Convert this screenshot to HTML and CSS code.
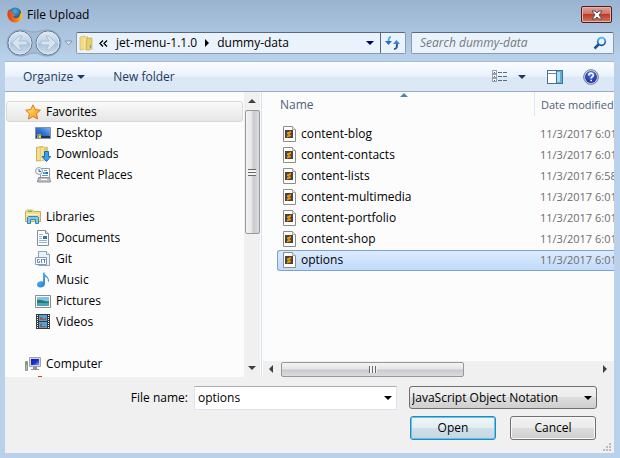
FILE: index.html
```html
<!DOCTYPE html>
<html lang="en">
<head>
<meta charset="utf-8">
<title>File Upload</title>
<link rel="stylesheet" href="styles.css">
</head>
<body>
<svg class="defs" aria-hidden="true">
  <defs>
    <linearGradient id="g-folder" x1="0" x2="1"><stop offset="0" stop-color="#fbeeb0"/><stop offset="1" stop-color="#e0bc55"/></linearGradient>
    <linearGradient id="g-disc" x1="0" x2="0" y1="0" y2="1"><stop offset="0" stop-color="#dfe9f4"/><stop offset=".5" stop-color="#bdd0e4"/><stop offset=".5" stop-color="#a9c1da"/><stop offset="1" stop-color="#cfe0f2"/></linearGradient>
    <linearGradient id="g-star" x1="0" x2="1" y1="0" y2="1"><stop offset="0" stop-color="#fff6a0"/><stop offset=".5" stop-color="#fdc23c"/><stop offset="1" stop-color="#f28a1c"/></linearGradient>
    <linearGradient id="g-desk" x1="0" x2="1" y1="1" y2="0"><stop offset="0" stop-color="#1a4aa8"/><stop offset=".5" stop-color="#2f6fd0"/><stop offset="1" stop-color="#86b8f2"/></linearGradient>
    <linearGradient id="g-music" x1="0" x2="1" y1="0" y2="1"><stop offset="0" stop-color="#6cc4f4"/><stop offset="1" stop-color="#1a74c4"/></linearGradient>
    <linearGradient id="g-arrow" x1="0" x2="0" y1="0" y2="1"><stop offset="0" stop-color="#4cbcec"/><stop offset="1" stop-color="#1a4fa8"/></linearGradient>
    <linearGradient id="g-screen" x1="0" x2="1" y1="0" y2="1"><stop offset="0" stop-color="#0a1cc0"/><stop offset=".55" stop-color="#1a30d8"/><stop offset="1" stop-color="#8aa8ff"/></linearGradient>
    <linearGradient id="g-fox" x1="0" x2="1" y1="0" y2="0"><stop offset="0" stop-color="#d8401c"/><stop offset=".6" stop-color="#f07c1c"/><stop offset="1" stop-color="#fcc830"/></linearGradient>
    <radialGradient id="g-help" cx=".5" cy=".3" r=".7"><stop offset="0" stop-color="#5478e0"/><stop offset="1" stop-color="#14289c"/></radialGradient>
    <radialGradient id="g-globe" cx=".5" cy=".3" r=".7"><stop offset="0" stop-color="#4cb4e8"/><stop offset="1" stop-color="#142c70"/></radialGradient>
  </defs>
  <symbol id="i-file" viewBox="0 0 16 16">
    <path d="M1.500.5h9l3 3v12h-12z" fill="#fff" stroke="#8c8c8c"/>
    <path d="M10.500.5v3h3" fill="#f0f0f0" stroke="#a4a4a4"/>
    <path d="M3 4h8v8H3z" fill="#454545"/>
    <path d="M9 5v2L7 8l2 1v1l-4 1.500V9.500L7 9 5 8V6.500z" fill="#ff9800"/>
  </symbol>
  <symbol id="i-down" viewBox="0 0 8 4"><path d="M0 0h8L4 4z" fill="currentColor"/></symbol>
  <symbol id="i-right" viewBox="0 0 4 8"><path d="M0 0l4 4-4 4z" fill="currentColor"/></symbol>
</svg>

<header class="titlebar">
  <svg class="icon" viewBox="0 0 16 16"><circle cx="8" cy="7" r="6.500" fill="url(#g-globe)"/><path d="M2.500 2C0 4 .2 8 1 10.500 2.500 14 5 15.500 8 15.500c4.500 0 7.500-3.500 7.500-8 0-2-.6-3.500-1.500-4.500.2 2-.2 3.500-1 4.500C12.500 10 11 11 9 11c-1.500 0-2.500-.8-3-1.800 1.200.3 2-.2 2.500-.9C7 8.300 6 7.500 6.200 6.500L4.500 5 4 3.500 2.700 4z" fill="url(#g-fox)"/></svg>
  <h1 class="title">File Upload</h1>
  <button class="close" aria-label="Close"><svg width="12" height="10" viewBox="0 0 12 10"><path d="M1 1h3l2 2 2-2h3L8 5l3 4H8L6 7 4 9H1l3-4z" fill="#fff" stroke="#544a54"/></svg></button>
</header>

<nav class="navbar">
  <div class="history">
    <svg class="history-plate" width="56" height="28" viewBox="0 0 56 28" aria-hidden="true"><path d="M14 1c8 0 8 2 14 2s6-2 14-2a13 13 0 010 26c-8 0-8-3-14-3s-6 3-14 3a13 13 0 010-26z" fill="#a4bbd4" stroke="#8ba5c2"/></svg>
    <button class="round" aria-label="Back"><svg width="26" height="26" viewBox="0 0 26 26"><circle cx="13" cy="13" r="12" fill="url(#g-disc)" stroke="#63788f"/><circle cx="13" cy="13" r="11" fill="none" stroke="#dde8f4"/><path d="M5 13l7-7h3l-3 5h8v4h-8l3 5h-3z" fill="#d7e3ef" stroke="#a9bfd6"/></svg></button>
    <button class="round" aria-label="Forward"><svg width="26" height="26" viewBox="0 0 26 26"><circle cx="13" cy="13" r="12" fill="url(#g-disc)" stroke="#63788f"/><circle cx="13" cy="13" r="11" fill="none" stroke="#dde8f4"/><path d="M21 13l-7-7h-3l3 5H6v4h8l-3 5h3z" fill="#d7e3ef" stroke="#a9bfd6"/></svg></button>
  </div>
  <button class="recent" aria-label="Recent locations"><svg width="9" height="6" viewBox="0 0 9 6"><path d="M1 1h7L4.500 5z" fill="#dde8f4" stroke="#8499b2"/></svg></button>
  <div class="address">
    <svg class="icon" viewBox="0 0 16 16"><path d="M2 2l5-1v13l-5 1z" fill="#f3dc86" stroke="#cfae54" stroke-width=".6"/><path d="M6 3l4-2v13l-4 1z" fill="url(#g-folder)"/><path d="M9 3h5v11l-3 1H8z" fill="#e9cc6c" stroke="#c9a64a" stroke-width=".6"/><path d="M12 10h1v3h-1z" fill="#4ca0e0"/></svg>
    <button class="crumb more" aria-label="More folders"><svg width="9" height="7" viewBox="0 0 9 7"><path d="M4 .5l-3 3 3 3M8 .5l-3 3 3 3" fill="none" stroke="#000" stroke-width="1.300"/></svg></button>
    <button class="crumb first">jet-menu-1.1.0</button>
    <svg class="sep" width="4" height="8"><use href="#i-right"/></svg>
    <button class="crumb">dummy-data</button>
    <button class="drop" aria-label="Previous locations"><svg width="8" height="4"><use href="#i-down"/></svg></button>
    <button class="refresh" aria-label="Refresh"><svg width="16" height="14" viewBox="0 0 16 14"><path d="M6 1C4 1 3.500 2 3.500 6" fill="none" stroke="#43b4e0" stroke-width="2"/><path d="M0 5h7L3.500 9z" fill="#2c6cbc"/><path d="M9 13c3 0 3-2 3-6" fill="none" stroke="#2454a4" stroke-width="2"/><path d="M8 8h7l-3.500-4z" fill="#3c84d4"/></svg></button>
  </div>
  <div class="search">
    <input type="search" placeholder="Search dummy-data" aria-label="Search dummy-data">
    <svg width="14" height="14" viewBox="0 0 14 14"><path d="M1.500 12.500L6 8" stroke="#1f4c94" stroke-width="2.500"/><circle cx="8.500" cy="5.500" r="3.800" fill="#e4f3fc" stroke="url(#g-arrow)" stroke-width="1.800"/></svg>
  </div>
</nav>

<div class="window">
  <div class="toolbar">
    <button class="tool">Organize <svg width="8" height="4"><use href="#i-down"/></svg></button>
    <button class="tool">New folder</button>
    <button class="tool views" aria-label="Change your view"><svg width="16" height="13" viewBox="0 0 16 13" shape-rendering="crispEdges"><path d="M.5.5h4v3h-4zM.5 4.500h4v3h-4zM.5 8.500h4v3h-4z" fill="#fff" stroke="#8fa0b4"/><path d="M2 2h1v1H2zM2 10h1v1H2z" fill="#2c5c9c"/><path d="M2 6h1v1H2z" fill="#e03020"/><path d="M6 2h4v1H6zM11 2h4v1h-4zM6 6h4v1H6zM11 6h4v1h-4zM6 10h4v1H6zM11 10h4v1h-4z" fill="#5c6c80"/></svg><svg width="8" height="4"><use href="#i-down"/></svg></button>
    <button class="tool pane" aria-label="Show the preview pane"><svg width="16" height="14" viewBox="0 0 16 14" shape-rendering="crispEdges"><path d="M.5.5h15v13H.5z" fill="#fff" stroke="#4c6e90"/><path d="M1 3h9v1H1z" fill="#6d8aa8"/><path d="M9 1h6v12H9z" fill="#54b4d8"/><path d="M10 2h3v10h-3z" fill="#a4def0"/><path d="M9 1h1v12H9z" fill="#4c6e90"/></svg></button>
    <button class="tool help" aria-label="Help"><svg width="16" height="16" viewBox="0 0 16 16"><circle cx="8" cy="8" r="7.300" fill="#dce0e8" stroke="#6c7688"/><circle cx="8" cy="8" r="6" fill="url(#g-help)"/><path d="M5.800 6.500c0-3 4.600-3 4.600-.3 0 1.500-2.200 1.500-2.200 3.300M8.200 10.700v1.600" fill="none" stroke="#fff" stroke-width="1.700"/></svg></button>
  </div>

  <main class="panes">
    <aside class="places">
      <ul class="tree">
        <li class="root current"><svg class="icon" viewBox="0 0 16 16"><path d="M8 .8l2.200 4.800 5.200.6-3.900 3.500 1.100 5.300L8 12.400 3.400 15l1.100-5.300L.6 6.200l5.200-.6z" fill="url(#g-star)" stroke="#e0761c"/></svg>Favorites</li>
        <li><svg class="icon" viewBox="0 0 16 16"><path d="M.5 2.500h15v11H.5z" fill="url(#g-desk)" stroke="#8494a8"/><path d="M1 11h14v2H1z" fill="#24344c"/><path d="M2 9h2v2H2z" fill="#f06a2c"/><path d="M4 9h2v2H4z" fill="#7cc43c"/><path d="M2 11h2v2H2z" fill="#4cb4f4"/><path d="M4 11h2v2H4z" fill="#fcd034"/></svg>Desktop</li>
        <li><svg class="icon" viewBox="0 0 16 16"><path d="M1.500 1.500l6-1v14l-6 .5z" fill="#f3de90" stroke="#cfae54"/><path d="M5.500 1.500l7-.5v13l-7 1z" fill="url(#g-folder)" stroke="#d8b860" stroke-width=".6"/><path d="M9.500 5.500h4v5h2.200L11.500 15.500 7 10.500h2.500z" fill="#3ca0ec" stroke="#1c68b8"/></svg>Downloads</li>
        <li><svg class="icon" viewBox="0 0 16 16"><path d="M5.500 1.500h9v10h-9z" fill="#fff" stroke="#8c9cac"/><path d="M9 3h3v1H9zM7 8h6v1H7z" fill="#7c94ac"/><path d="M8 5h3v2H8z" fill="#34b0d0"/><path d="M11 5h2v2h-2z" fill="#2c5cc0"/><path d="M3.500 10.500h11l1 4.500h-13z" fill="#bcc0c4" stroke="#8c9094"/><path d="M6 12h6v1H6z" fill="#fff"/><circle cx="4" cy="4" r="3.500" fill="#eef4fa" stroke="#94a4b4"/><path d="M4 2v2.500h2" fill="none" stroke="#50647c"/></svg>Recent Places</li>
        <li class="root section"><svg class="icon" viewBox="0 0 16 16"><path d="M.5 2.500l2-1.500h5l1 1.500h7v10H.5z" fill="#f2dc8c" stroke="#ccac50"/><path d="M3 2h4v1H3z" fill="#5cb85c"/><path d="M1 5h14v1H1z" fill="#fff6c8"/><path d="M2.500 14.500v-6l1-1h9l1 1v6h-3v-4h-5v4z" fill="#7cc8ec" stroke="#2c88bc"/></svg>Libraries</li>
        <li><svg class="icon" viewBox="0 0 16 16"><path d="M2.500.5h8l3 3v12h-11z" fill="#fff" stroke="#8090a0"/><path d="M10.500.5v3h3" fill="#e4ecf4" stroke="#8090a0"/><path d="M4 4h4v1H4zM4 6h3v1H4zM4 8h3v1H4zM4 10h8v1H4zM4 12h8v1H4z" fill="#9cb0c8"/><path d="M8 6h4v3H8z" fill="#2c74b8"/></svg>Documents</li>
        <li><svg class="icon" viewBox="0 0 16 16"><path d="M3.500.5h8l3 3v11h-11z" fill="#e8f0f8" stroke="#8ca4bc"/><path d="M11.500.5v3h3" fill="#fff" stroke="#8ca4bc"/><path d="M.5 6.500h11v7H.5z" fill="#fff" stroke="#8499b8"/><path d="M4.500 8.500h-2v3h2V10M6.500 8v4M7.500 8.500h3M9.500 8.500V12" fill="none" stroke="#6484b4"/></svg>Git</li>
        <li><svg class="icon" viewBox="0 0 16 16"><path d="M8 .5h1.500c0 3 5 4 4.500 9h-1c0-3-1-4-3-4.500V12c0 2-2 3.500-4.500 3.500S1.500 14 2 12s3-3.500 6-2.500z" fill="url(#g-music)"/></svg>Music</li>
        <li><svg class="icon" viewBox="0 0 16 16"><path d="M.5 2.500h15v12H.5z" fill="#fff" stroke="#8c8c8c"/><path d="M2 4h12v4H2z" fill="#7cc4f0"/><path d="M2 7c4-1 8 2 12 1v3H2z" fill="#2c7c64"/><path d="M2 10h12v3H2z" fill="#48a4b8"/></svg>Pictures</li>
        <li><svg class="icon" viewBox="0 0 16 16" shape-rendering="crispEdges"><path d="M1 0h14v15H1z" fill="#383838"/><path d="M4 1h8v6H4zM4 8h8v6H4z" fill="#4ca4d8"/><path d="M5 3h2l1 2 3-1v2H5zM5 10l2-1v3h4v1H5z" fill="#a0584c"/><path d="M2.500 1v13M13.500 1v13" stroke="#fff" stroke-dasharray="1 1"/></svg>Videos</li>
        <li class="root section"><svg class="icon" viewBox="0 0 16 16"><path d="M4.500 1.500h11v9h-11z" fill="#d4d4d4" stroke="#a4a4a4"/><path d="M6 3h8v6H6z" fill="url(#g-screen)"/><path d="M8 11h4v2h2v1H6v-1h2z" fill="#909090"/><path d="M.5 5.500h2v9h-2z" fill="#bcbcbc" stroke="#909090"/><path d="M1 6h1v3H1z" fill="#40d030"/></svg>Computer</li>
        <li class="drive"><svg class="icon" viewBox="0 0 16 16"><path d="M3 2h4v4H3z" fill="#d84428"/></svg></li>
      </ul>
      <div class="scroll vertical" aria-hidden="true">
        <svg class="end" width="8" height="4" viewBox="0 0 8 4"><path d="M0 4h8L4 0z" fill="#404040"/></svg>
        <div class="thumb"></div>
        <svg class="end" width="8" height="4" viewBox="0 0 8 4"><path d="M0 0h8L4 4z" fill="#404040"/></svg>
      </div>
    </aside>

    <section class="files">
      <div class="listing">
        <svg class="sorted" width="8" height="4" viewBox="0 0 8 4"><path d="M0 4h8L4 0z" fill="#4c88ac"/></svg>
        <table>
          <colgroup><col><col class="date-col"></colgroup>
          <thead><tr><th scope="col">Name</th><th scope="col">Date modified</th></tr></thead>
          <tbody>
            <tr><td><svg class="icon"><use href="#i-file"/></svg>content-blog</td><td>11/3/2017 6:01</td></tr>
            <tr><td><svg class="icon"><use href="#i-file"/></svg>content-contacts</td><td>11/3/2017 6:01</td></tr>
            <tr><td><svg class="icon"><use href="#i-file"/></svg>content-lists</td><td>11/3/2017 6:58</td></tr>
            <tr><td><svg class="icon"><use href="#i-file"/></svg>content-multimedia</td><td>11/3/2017 6:01</td></tr>
            <tr><td><svg class="icon"><use href="#i-file"/></svg>content-portfolio</td><td>11/3/2017 6:01</td></tr>
            <tr><td><svg class="icon"><use href="#i-file"/></svg>content-shop</td><td>11/3/2017 6:01</td></tr>
            <tr class="selected"><td><svg class="icon"><use href="#i-file"/></svg>options</td><td>11/3/2017 6:01</td></tr>
          </tbody>
        </table>
      </div>
      <div class="scroll horizontal" aria-hidden="true">
        <svg class="end" width="4" height="8" viewBox="0 0 4 8"><path d="M4 0v8L0 4z" fill="#404040"/></svg>
        <div class="thumb"></div>
        <svg class="end last" width="4" height="8"><use href="#i-right"/></svg>
      </div>
    </section>
  </main>

  <form class="footer">
    <label for="filename">File name:</label>
    <div class="combo">
      <input id="filename" type="text" value="options">
      <button type="button" aria-label="Recent file names"><svg width="8" height="4"><use href="#i-down"/></svg></button>
    </div>
    <div class="choices">
      <div class="select">
        <select aria-label="File type"><option>JavaScript Object Notation</option></select>
        <svg width="8" height="4"><use href="#i-down"/></svg>
      </div>
      <div class="actions">
        <button type="button" class="push default">Open</button>
        <button type="button" class="push">Cancel</button>
      </div>
    </div>
    <svg class="grip" width="8" height="8" viewBox="0 0 8 8" shape-rendering="crispEdges" aria-hidden="true"><path d="M6 0h2v2H6zM3 3h2v2H3zM6 3h2v2H6zM0 6h2v2H0zM3 6h2v2H3zM6 6h2v2H6z" fill="#bcbcbc"/></svg>
  </form>
</div>
</body>
</html>
```
FILE: styles.css
```css
* { box-sizing: border-box; }

body {
  margin: 0;
  height: 100vh;
  display: flex;
  flex-direction: column;
  overflow: hidden;
  background: linear-gradient(#9ab3d0, #b9d1ea 60px);
  font: 12px/16px "Open Sans", "Noto Sans", sans-serif;
  color: #000;
}

button, input, select { font: inherit; color: inherit; }
button { margin: 0; padding: 0; border: 0; background: none; white-space: nowrap; }
svg { display: block; flex: none; }
.defs { position: absolute; width: 0; height: 0; }
.icon { width: 16px; height: 16px; }

.titlebar {
  display: flex;
  align-items: center;
  gap: 4px;
  height: 29px;
  padding: 0 8px 0 7px;
}
.title { flex: 1; margin: 0; font-size: 12px; font-weight: 400; }
.close {
  display: flex;
  align-items: center;
  justify-content: center;
  width: 31px;
  height: 17px;
  border: 1px solid #4c1c24;
  border-radius: 2px;
  background: linear-gradient(#e0a298, #cc7468 48%, #b83c28 50%, #d47860);
  box-shadow: inset 0 0 0 1px #e8b4aa;
}

.navbar {
  display: flex;
  align-items: center;
  height: 32px;
  padding: 0 6px 4px 6px;
}
.history { position: relative; display: flex; gap: 2px; padding: 0 1px; }
.history-plate { position: absolute; left: 0; top: -1px; }
.round { position: relative; }
.recent { padding: 0 3px 0 2px; }
.address, .search {
  display: flex;
  align-items: center;
  height: 22px;
  border: 1px solid #8c9cb0;
  border-top-color: #56687c;
  border-radius: 2px;
  background: #eaf2fb;
}
.address { flex: 1 1 330px; margin-right: 5px; padding-left: 1px; }
.search { flex: 1 1 203px; min-width: 0; padding: 0 6px 0 8px; }
.more { margin: 0 8px 0 5px; }
.first { margin-right: 8px; }
.sep { margin-right: 8px; }
.drop { margin-left: auto; padding: 0 6px; color: #000060; }
.refresh { height: 20px; padding: 0 4px; border-left: 1px solid #56687c; }
.search input {
  flex: 1;
  min-width: 0;
  padding: 0;
  border: 0;
  outline: 0;
  background: none;
}
.search input::placeholder { color: #75797e; font-style: italic; opacity: 1; }

.window {
  flex: 1;
  min-height: 0;
  display: flex;
  flex-direction: column;
  margin: 0 6px 5px 5px;
  background: #f0f0f0;
}

.toolbar {
  display: flex;
  align-items: center;
  height: 31px;
  padding: 0 15px 0 18px;
  border-top: 1px solid #a4bcd8;
  border-bottom: 1px solid #98acc8;
  background: linear-gradient(#fafdff, #e8f1fb 50%, #dce7f5 50%, #dde8f6);
  color: #1e395b;
}
.tool { display: flex; align-items: center; gap: 4px; margin-right: 28px; }
.views { gap: 10px; margin: 0 21px 0 auto; }
.pane { margin-right: 20px; }
.help { margin-right: 0; }

.panes { flex: 1; min-height: 0; display: flex; background: #fcfcfc; }
.places {
  flex: 1 1 257px;
  min-width: 0;
  display: flex;
  border-right: 1px solid #d6e3f0;
}
.tree {
  flex: 1;
  margin: 0;
  padding: 9px 1px 0;
  overflow: hidden;
  list-style: none;
}
.tree li {
  display: flex;
  align-items: center;
  gap: 5px;
  height: 21px;
  padding-left: 29px;
  white-space: nowrap;
}
.tree .root { padding-left: 19px; }
.tree .section { margin-top: 21px; }
.tree .drive { align-items: flex-start; }
.tree .current {
  padding-left: 18px;
  border: 1px solid #d9d9d9;
  border-radius: 3px;
  background: linear-gradient(#fafafa, #e6e6e6);
}

.scroll { display: flex; align-items: center; background: #f0f0f0; }
.scroll .thumb { border: 1px solid #979797; border-radius: 2px; }
.vertical { flex-direction: column; width: 16px; margin-right: 1px; padding: 7px 0; }
.vertical .thumb {
  width: 15px;
  height: 124px;
  margin: 7px 0 auto;
  background:
    repeating-linear-gradient(#686868 0 1px, #f4f4f4 1px 3px) center / 8px 7px no-repeat,
    linear-gradient(90deg, #f4f4f4, #e4e4e6 48%, #c8c9ce 52%, #dcdcdf);
}
.horizontal { height: 16px; margin-left: 1px; padding: 0 7px 0 6px; }
.horizontal .thumb {
  flex: 0 1 183px;
  height: 15px;
  margin: 0 auto 0 8px;
  background:
    repeating-linear-gradient(90deg, #686868 0 1px, #f4f4f4 1px 3px) center / 8px 7px no-repeat,
    linear-gradient(#f4f4f4, #e4e4e6 48%, #c8c9ce 52%, #dcdcdf);
}
.last { color: #404040; }

.files { flex: 1 1 352px; min-width: 0; display: flex; flex-direction: column; }
.listing { position: relative; flex: 1; min-height: 0; padding-left: 15px; overflow: hidden; }
.sorted { position: absolute; left: 138px; top: 1px; }
table { width: 100%; table-layout: fixed; border-collapse: separate; border-spacing: 0; }
.date-col { width: 80px; }
th, td { padding: 0; text-align: left; font-weight: 400; white-space: nowrap; }
th { height: 24px; padding: 2px 0 0 3px; color: #4c607a; }
th + th { padding-left: 6px; border-left: 1px solid #dbe8f5; font-size: 11px; }
tbody::before { content: ""; display: block; height: 8px; }
td { height: 21px; padding: 0 0 1px 6px; overflow: hidden; }
td:first-child { padding-left: 5px; }
td .icon { display: inline-block; vertical-align: top; margin-right: 3px; }
td + td { color: #6d6d6d; font-size: 11px; }
.selected td {
  border: solid #7da2ce;
  border-width: 1px 0;
  background: linear-gradient(#dcebfc, #c1dbfc);
}
.selected td:first-child { padding-left: 4px; border-left-width: 1px; border-radius: 3px 0 0 3px; }

.footer {
  position: relative;
  display: flex;
  align-items: flex-start;
  margin: 0;
  padding: 9px 17px 13px 20px;
}
.footer label { flex: 1 1 169px; padding: 4px 6px 0 0; text-align: right; }
.combo {
  flex: 1 1 203px;
  min-width: 0;
  display: flex;
  align-items: center;
  height: 24px;
  margin-right: 12px;
  border: 1px solid #dde3ec;
  border-top-color: #abadb3;
  background: #fff;
}
.combo input { flex: 1; min-width: 0; padding: 0 0 0 3px; border: 0; outline: 0; background: none; }
.combo button { padding: 8px 4px; }
.choices { flex: 1 1 188px; min-width: 0; }
.select { position: relative; }
.select select {
  display: block;
  width: 100%;
  height: 23px;
  padding: 0 18px 0 2px;
  appearance: none;
  border: 1px solid #707070;
  border-radius: 3px;
  background: linear-gradient(#f2f2f2, #ebebeb 48%, #dddddd 50%, #cfcfcf);
}
.select svg { position: absolute; right: 5px; top: 10px; pointer-events: none; }
.actions { display: flex; gap: 14px; padding: 7px 1px 0; }
.push {
  flex: 1;
  height: 24px;
  border: 1px solid #707070;
  border-radius: 3px;
  background: linear-gradient(#f2f2f2, #ebebeb 48%, #dddddd 50%, #cfcfcf);
  box-shadow: inset 0 0 0 1px #f8f8f8;
}
.default {
  border-color: #3c7fb1;
  background: linear-gradient(#f0f6f8, #e2edf2 48%, #d0e0e8 50%, #c4d6e0);
  box-shadow: inset 0 0 0 1px #48d0fa;
}
.grip { position: absolute; right: 3px; bottom: 2px; }
```
